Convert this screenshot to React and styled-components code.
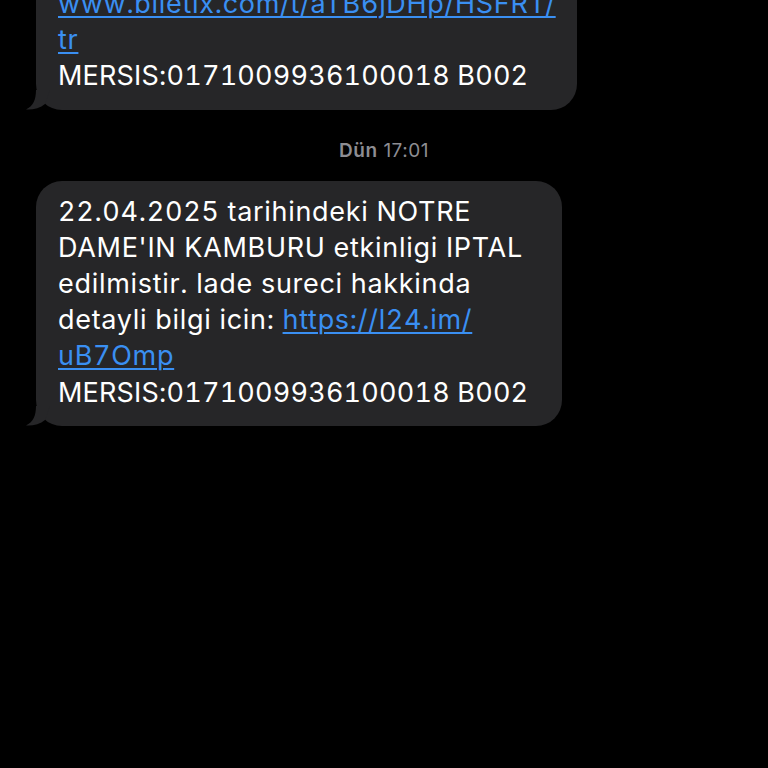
import * as React from 'react'
import styled, { createGlobalStyle } from 'styled-components'

const Global = createGlobalStyle`
html, body {
    margin: 0;
    padding: 0;
    background: #000;
}
body {
    font-family: Inter, "Liberation Sans", Arial, sans-serif;
    -webkit-font-smoothing: antialiased;
}
`

const Screen = styled.div`
width: 768px;
height: 768px;
overflow: hidden;
background: #000;
`

const Thread = styled.div`
display: flex;
flex-direction: column;
align-items: flex-start;
margin-top: -27px;
`

const Stamp = styled.div`
align-self: center;
margin: 29px 0 19px;
font-size: 19px;
line-height: 23px;
letter-spacing: 0.5px;
color: #8d8d92;

b{
    font-weight: 600;
}
`

const BubbleWrap = styled.div`
position: relative;
margin-left: 36px;
`

const Bubble = styled.div`
width: ${p => p.$w}px;
box-sizing: border-box;
background: #262628;
border-radius: 26px;
padding: 13px 0 15px 22px;
color: #fff;
font-size: 27px;
line-height: 36.2px;
letter-spacing: 0.7px;
font-variant-numeric: tabular-nums;
white-space: nowrap;
`

const Link = styled.a`
color: #3a8ff2;
text-decoration: underline;
text-decoration-thickness: 2px;
text-underline-offset: 3px;
`

// sender code line, digits sit a bit tighter than the body text
const Code = styled.span`
letter-spacing: 0.2px;
`

const Tail = styled.svg`
position: absolute;
left: -10px;
bottom: 0;
`

const BubbleTail = () => (
    <Tail width="24" height="20" viewBox="0 0 24 20">
        <path d="M10 0 C10 10 7 16 0 19.5 C7 20 14 18 19 14 L24 0 Z" fill="#262628" />
    </Tail>
)

const Message = ({width, children}) => (
    <BubbleWrap>
        <Bubble $w={width}>{children}</Bubble>
        <BubbleTail />
    </BubbleWrap>
)

export default function App() {
    return (
        <Screen>
            <Global />
            <Thread>
                <Message width={541}>
                    <Link>www.biletix.com/t/aTB6jDHp/HSFRT/</Link><br />
                    <Link>tr</Link><br />
                    <Code>MERSIS:0171009936100018 B002</Code>
                </Message>
                <Stamp><b>Dün</b> 17:01</Stamp>
                <Message width={526}>
                    22.04.2025 tarihindeki NOTRE<br />
                    DAME'IN KAMBURU etkinligi IPTAL<br />
                    edilmistir. lade sureci hakkinda<br />
                    detayli bilgi icin: <Link>https://l24.im/</Link><br />
                    <Link>uB7Omp</Link><br />
                    <Code>MERSIS:0171009936100018 B002</Code>
                </Message>
            </Thread>
        </Screen>
    )
}
